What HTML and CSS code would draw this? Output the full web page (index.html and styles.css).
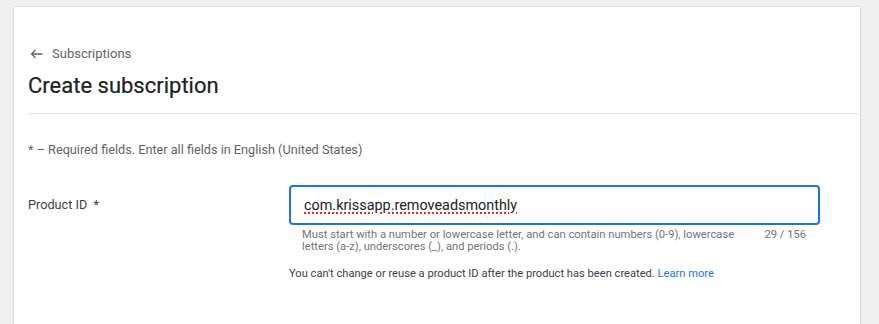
FILE: index.html
```html
<!DOCTYPE html>
<html>
<head>
<meta charset="utf-8">
<link rel="stylesheet" href="styles.css">
</head>
<body>
<div class="card">
  <header class="header">
    <a class="back" href="#">
      <svg class="back-icon" width="13" height="10" viewBox="0 0 13 10"><path d="M12.5 5H1.5M5.5 1L1.5 5L5.5 9" fill="none" stroke="#5f6368" stroke-width="1.3"/></svg>
      <span>Subscriptions</span>
    </a>
    <h1 class="title">Create subscription</h1>
  </header>
  <section class="content">
    <p class="required">* – Required fields. Enter all fields in English (United States)</p>
    <div class="row">
      <div class="label">Product ID&nbsp; *</div>
      <div class="field">
        <div class="input"><span class="value">com.krissapp.removeadsmonthly</span></div>
        <div class="hint">
          <span class="hint-text">Must start with a number or lowercase letter, and can contain numbers (0-9), lowercase letters (a-z), underscores (_), and periods (.).</span>
          <span class="counter">29 / 156</span>
        </div>
        <p class="note">You can't change or reuse a product ID after the product has been created. <a href="#" class="link">Learn more</a></p>
      </div>
    </div>
  </section>
</div>
</body>
</html>
```
FILE: styles.css
```css
html, body {
  margin: 0;
  padding: 0;
  height: 100%;
  overflow: hidden;
}
body {
  background: #f0f0f0;
  font-family: Roboto, "Liberation Sans", Arial, sans-serif;
  color: #3c4043;
}
.card {
  margin: 7px 19px 0 14px;
  background: #fff;
  box-shadow: 0 0 2px rgba(0,0,0,0.18), 0 1px 2px rgba(0,0,0,0.08);
  height: 330px;
}
.header {
  margin-left: 14px;
  padding-top: 38px;
  border-bottom: 1px solid #e2e2e2;
  height: 68px;
}
.back {
  display: flex;
  align-items: center;
  gap: 9px;
  text-decoration: none;
  color: #5f6368;
  font-size: 13px;
  line-height: 18px;
  margin-left: 2px;
}
.back-icon { display: block; }
.title {
  margin: 9px 0 0 0;
  font-size: 22px;
  line-height: 28px;
  font-weight: 400;
  color: #202124;
  -webkit-text-stroke: 0.2px #202124;
}
.content {
  padding-left: 14px;
}
.required {
  margin: 0;
  padding-top: 26px;
  font-size: 12.7px;
  line-height: 20px;
  color: #5f6368;
}
.row {
  display: grid;
  grid-template-columns: 261px 531px;
  margin-top: 25px;
}
.label {
  font-size: 12.7px;
  line-height: 20px;
  padding-top: 10px;
  color: #3c4043;
}
.input {
  box-sizing: border-box;
  height: 40px;
  border: 2px solid #1a73e8;
  border-radius: 4px;
  padding: 0 13px;
  display: flex;
  align-items: center;
  font-size: 14.4px;
  color: #202124;
}
.value {
  text-decoration: underline dotted #d93025;
  text-decoration-thickness: 1.5px;
  text-underline-offset: 3px;
}
.hint {
  display: flex;
  justify-content: space-between;
  gap: 24px;
  padding: 4px 14px 0 13px;
  font-size: 11.2px;
  line-height: 12px;
  color: #70757a;
}
.hint-text { flex: 1; }
.counter { white-space: nowrap; }
.note {
  margin: 14px 0 0 0;
  font-size: 11.15px;
  line-height: 14px;
  color: #3c4043;
}
.link {
  color: #1a73e8;
  text-decoration: none;
}
```
